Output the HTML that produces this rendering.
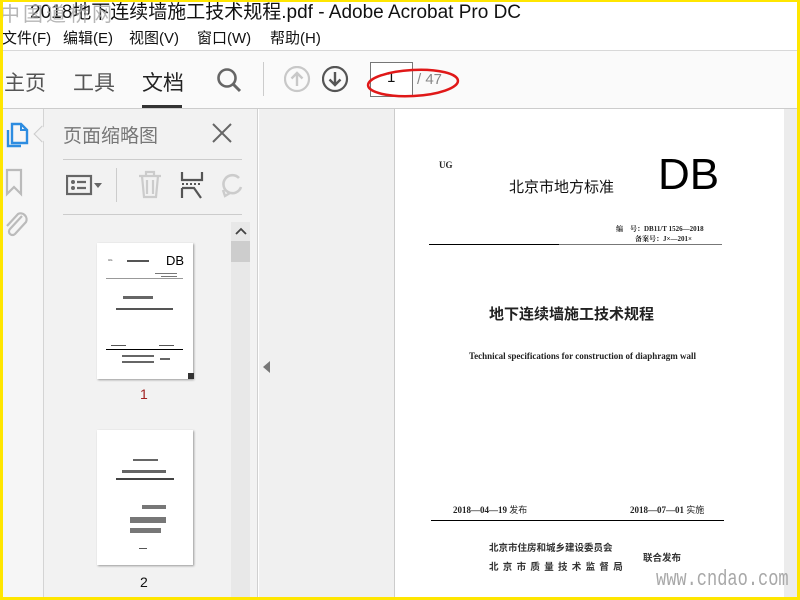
<!DOCTYPE html>
<html><head><meta charset="utf-8"><style>
*{margin:0;padding:0;box-sizing:border-box}
body{width:800px;height:600px;position:relative;overflow:hidden;background:#fff;font-family:"Liberation Sans","Noto Sans CJK SC",sans-serif;color:#222}
.a{position:absolute}
.cjk{font-family:"Noto Sans CJK SC",sans-serif}
.serif{font-family:"Liberation Serif","Noto Serif CJK SC",serif}
</style></head><body>
<!-- title -->
<div class="a" style="left:30px;top:-3px;font-size:19px;color:#111;white-space:nowrap">2018地下连续墙施工技术规程.pdf - Adobe Acrobat Pro DC</div>
<div class="a cjk" style="left:0;top:-2px;font-size:20px;color:#aaa;letter-spacing:3px;opacity:.85">中国道桥网</div>
<!-- menu -->
<div class="a" style="left:2px;top:27px;font-size:15px;color:#111;white-space:nowrap">文件(F)</div>
<div class="a" style="left:63px;top:27px;font-size:15px;color:#111">编辑(E)</div>
<div class="a" style="left:129px;top:27px;font-size:15px;color:#111">视图(V)</div>
<div class="a" style="left:197px;top:27px;font-size:15px;color:#111">窗口(W)</div>
<div class="a" style="left:270px;top:27px;font-size:15px;color:#111">帮助(H)</div>
<div class="a" style="left:0;top:50px;width:800px;height:1px;background:#d8d8d8"></div>
<!-- toolbar -->
<div class="a" style="left:0;top:51px;width:800px;height:57px;background:#fafafa"></div>
<div class="a" style="left:4px;top:67px;font-size:21px;color:#555">主页</div>
<div class="a" style="left:73px;top:67px;font-size:21px;color:#555">工具</div>
<div class="a" style="left:142px;top:67px;font-size:21px;color:#222">文档</div>
<div class="a" style="left:142px;top:105px;width:40px;height:3px;background:#333"></div>
<svg class="a" style="left:214px;top:66px" width="30" height="30"><circle cx="13" cy="12" r="8.5" fill="none" stroke="#666" stroke-width="2.6"/><line x1="19" y1="18" x2="26" y2="25" stroke="#666" stroke-width="3"/></svg>
<div class="a" style="left:263px;top:62px;width:1px;height:34px;background:#ccc"></div>
<svg class="a" style="left:284px;top:66px" width="28" height="28"><circle cx="13" cy="13" r="12" fill="none" stroke="#c8c8c8" stroke-width="2.2"/><path d="M13 20V7M7.5 12.5L13 7l5.5 5.5" fill="none" stroke="#c8c8c8" stroke-width="2.4"/></svg>
<svg class="a" style="left:322px;top:66px" width="28" height="28"><circle cx="13" cy="13" r="12" fill="none" stroke="#555" stroke-width="2.2"/><path d="M13 6v13M7.5 13.5L13 19l5.5-5.5" fill="none" stroke="#555" stroke-width="2.4"/></svg>
<div class="a" style="left:370px;top:62px;width:43px;height:35px;border:1px solid #777;background:#fff"></div>
<div class="a" style="left:387px;top:69px;font-size:15px;color:#111">1</div>
<div class="a" style="left:417px;top:71px;font-size:15px;color:#888">/ 47</div>
<svg class="a" style="left:366px;top:64px" width="100" height="38"><ellipse cx="47" cy="19" rx="45" ry="13" fill="none" stroke="#e01818" stroke-width="2.5" transform="rotate(-3 47 19)"/></svg>
<div class="a" style="left:0;top:108px;width:800px;height:1px;background:#ccc"></div>
<!-- left rail -->
<div class="a" style="left:0;top:109px;width:44px;height:491px;background:#f6f6f6;border-right:1px solid #d4d4d4"></div>
<svg class="a" style="left:4px;top:120px" width="26" height="30"><path d="M8 4h9l6 6v13H8z" fill="none" stroke="#2d8ce0" stroke-width="2.4"/><path d="M17 4v6h6" fill="none" stroke="#2d8ce0" stroke-width="2"/><path d="M4 10v16h13" fill="none" stroke="#2d8ce0" stroke-width="2.4"/></svg>
<svg class="a" style="left:4px;top:168px" width="20" height="30"><path d="M3 2h14v24l-7-7-7 7z" fill="none" stroke="#bbb" stroke-width="2.2"/></svg>
<svg class="a" style="left:2px;top:210px" width="26" height="30"><path d="M20 6L8 19a3.5 3.5 0 0 0 5 5l11-12a6 6 0 0 0-8-8L5 16" fill="none" stroke="#bbb" stroke-width="2.2"/></svg>
<!-- panel -->
<div class="a" style="left:44px;top:109px;width:214px;height:491px;background:#f2f2f2;border-right:1px solid #d0d0d0"></div>
<div class="a" style="left:36px;top:128px;width:12px;height:12px;background:#f2f2f2;border-left:1px solid #ccc;border-bottom:1px solid #ccc;transform:rotate(45deg)"></div>
<div class="a" style="left:63px;top:121px;font-size:19px;color:#777">页面缩略图</div>
<svg class="a" style="left:211px;top:122px" width="22" height="22"><path d="M2 2l18 18M20 2L2 20" stroke="#666" stroke-width="2"/></svg>
<div class="a" style="left:63px;top:159px;width:179px;height:1px;background:#ccc"></div>
<svg class="a" style="left:66px;top:174px" width="40" height="24"><rect x="1" y="2" width="24" height="18" fill="none" stroke="#666" stroke-width="2.2"/><circle cx="7" cy="8" r="2" fill="#666"/><circle cx="7" cy="14" r="2" fill="#666"/><path d="M11 8h9M11 14h9" stroke="#666" stroke-width="2.2"/><path d="M28 9h8l-4 5z" fill="#666"/></svg>
<div class="a" style="left:116px;top:168px;width:1px;height:34px;background:#ccc"></div>
<svg class="a" style="left:137px;top:170px" width="26" height="30"><path d="M2 6h22M9 6V2h8v4M5 6l2 21h12l2-21M10 10v14M16 10v14" fill="none" stroke="#ccc" stroke-width="2.2"/></svg>
<svg class="a" style="left:179px;top:170px" width="26" height="30"><path d="M3 2v8h20V2" fill="none" stroke="#555" stroke-width="2.2"/><path d="M3 14h20" stroke="#555" stroke-width="2" stroke-dasharray="2 2"/><path d="M3 18v10M3 18h12l7 10" fill="none" stroke="#555" stroke-width="2.2"/></svg>
<svg class="a" style="left:219px;top:170px" width="26" height="30"><path d="M20 8a9 9 0 1 0 2 9" fill="none" stroke="#ccc" stroke-width="2.6"/><path d="M4 20l2 6 5-3" fill="none" stroke="#ccc" stroke-width="2.4"/></svg>
<div class="a" style="left:63px;top:214px;width:179px;height:1px;background:#ccc"></div>
<div class="a" style="left:231px;top:222px;width:19px;height:378px;background:#e8e8e8"></div>
<div class="a" style="left:231px;top:241px;width:19px;height:21px;background:#cdcdcd"></div>
<svg class="a" style="left:234px;top:226px" width="14" height="10"><path d="M2 8l5-5 5 5" fill="none" stroke="#444" stroke-width="1.8"/></svg>
<!-- thumb1 -->
<div class="a" style="left:97px;top:243px;width:96px;height:136px;background:#fff;box-shadow:1px 1px 2px #999">
  <div class="a" style="left:11px;top:15px;font-size:3px">UG</div>
  <div class="a" style="left:30px;top:17px;width:22px;height:2px;background:#555"></div>
  <div class="a" style="left:69px;top:10px;font-size:13px;color:#000">DB</div>
  <div class="a" style="left:58px;top:30px;width:22px;height:1px;background:#777"></div>
  <div class="a" style="left:64px;top:33px;width:16px;height:1px;background:#777"></div>
  <div class="a" style="left:9px;top:35px;width:77px;height:1px;background:#999"></div>
  <div class="a" style="left:26px;top:53px;width:30px;height:3px;background:#666"></div>
  <div class="a" style="left:19px;top:65px;width:57px;height:2px;background:#555"></div>
  <div class="a" style="left:14px;top:102px;width:15px;height:1px;background:#555"></div>
  <div class="a" style="left:62px;top:102px;width:15px;height:1px;background:#555"></div>
  <div class="a" style="left:9px;top:106px;width:77px;height:1px;background:#000"></div>
  <div class="a" style="left:25px;top:112px;width:32px;height:2px;background:#666"></div>
  <div class="a" style="left:25px;top:118px;width:32px;height:2px;background:#666"></div>
  <div class="a" style="left:63px;top:115px;width:10px;height:2px;background:#666"></div>
</div>
<div class="a" style="left:188px;top:373px;width:6px;height:6px;background:#333"></div>
<div class="a" style="left:140px;top:386px;font-size:14px;color:#a02020">1</div>
<!-- thumb2 -->
<div class="a" style="left:97px;top:430px;width:96px;height:135px;background:#fff;box-shadow:1px 1px 2px #999">
  <div class="a" style="left:36px;top:29px;width:25px;height:2px;background:#666"></div>
  <div class="a" style="left:25px;top:40px;width:44px;height:3px;background:#666"></div>
  <div class="a" style="left:19px;top:48px;width:58px;height:2px;background:#444"></div>
  <div class="a" style="left:45px;top:75px;width:24px;height:4px;background:#777"></div>
  <div class="a" style="left:33px;top:87px;width:36px;height:6px;background:#777"></div>
  <div class="a" style="left:33px;top:98px;width:31px;height:5px;background:#777"></div>
  <div class="a" style="left:42px;top:118px;width:8px;height:1px;background:#555"></div>
</div>
<div class="a" style="left:140px;top:574px;font-size:14px;color:#111">2</div>
<!-- doc area -->
<div class="a" style="left:259px;top:109px;width:541px;height:491px;background:#f0f0f0"></div>
<div class="a" style="left:394px;top:109px;width:1px;height:491px;background:#ccc"></div>
<svg class="a" style="left:262px;top:360px" width="10" height="14"><path d="M8 1v12L1 7z" fill="#777"/></svg>
<div class="a" style="left:395px;top:109px;width:389px;height:491px;background:#fff"></div>
<div class="a serif" style="left:439px;top:160px;font-size:9px;font-weight:bold">UG</div>
<div class="a" style="left:509px;top:176px;font-size:15px;color:#111">北京市地方标准</div>
<div class="a" style="left:658px;top:153px;font-size:44px;color:#000;line-height:1">DB</div>
<div class="a serif" style="left:616px;top:224px;font-size:7px;font-weight:bold">编　号：DB11/T 1526—2018</div>
<div class="a serif" style="left:635px;top:234px;font-size:7px;font-weight:bold">备案号：J×—201×</div>
<div class="a" style="left:429px;top:244px;width:130px;height:1px;background:#000"></div>
<div class="a" style="left:559px;top:244px;width:163px;height:1px;background:#777"></div>
<div class="a" style="left:489px;top:303px;font-size:15px;font-weight:bold;color:#222">地下连续墙施工技术规程</div>
<div class="a serif" style="left:469px;top:351px;font-size:9px;font-weight:bold;white-space:nowrap">Technical specifications for construction of diaphragm wall</div>
<div class="a serif" style="left:453px;top:503px;font-size:9px;font-weight:bold;white-space:nowrap">2018—04—19 <span class="cjk" style="font-weight:normal">发布</span></div>
<div class="a serif" style="left:630px;top:503px;font-size:9px;font-weight:bold;white-space:nowrap">2018—07—01 <span class="cjk" style="font-weight:normal">实施</span></div>
<div class="a" style="left:431px;top:520px;width:293px;height:1px;background:#000"></div>
<div class="a" style="left:489px;top:540px;font-size:9.5px;font-weight:bold;color:#333;white-space:nowrap">北京市住房和城乡建设委员会</div>
<div class="a" style="left:489px;top:559px;font-size:9.5px;font-weight:bold;color:#333;letter-spacing:4.3px;white-space:nowrap">北京市质量技术监督局</div>
<div class="a" style="left:643px;top:550px;font-size:9.5px;font-weight:bold;color:#333">联合发布</div>
<div class="a" style="left:784px;top:109px;width:13px;height:491px;background:#ececec"></div>
<div class="a" style="left:656px;top:568px;font-family:'Liberation Mono',monospace;font-size:17px;color:#a8a8a8;transform:scaleY(1.3);transform-origin:left top;white-space:nowrap">www.cndao.com</div>
<!-- yellow frame -->
<div class="a" style="left:0;top:0;width:800px;height:2px;background:#ffe600"></div>
<div class="a" style="left:0;top:0;width:3px;height:600px;background:#ffe600"></div>
<div class="a" style="left:797px;top:0;width:3px;height:600px;background:#ffe600"></div>
<div class="a" style="left:0;top:597px;width:800px;height:3px;background:#ffe600"></div>
</body></html>
